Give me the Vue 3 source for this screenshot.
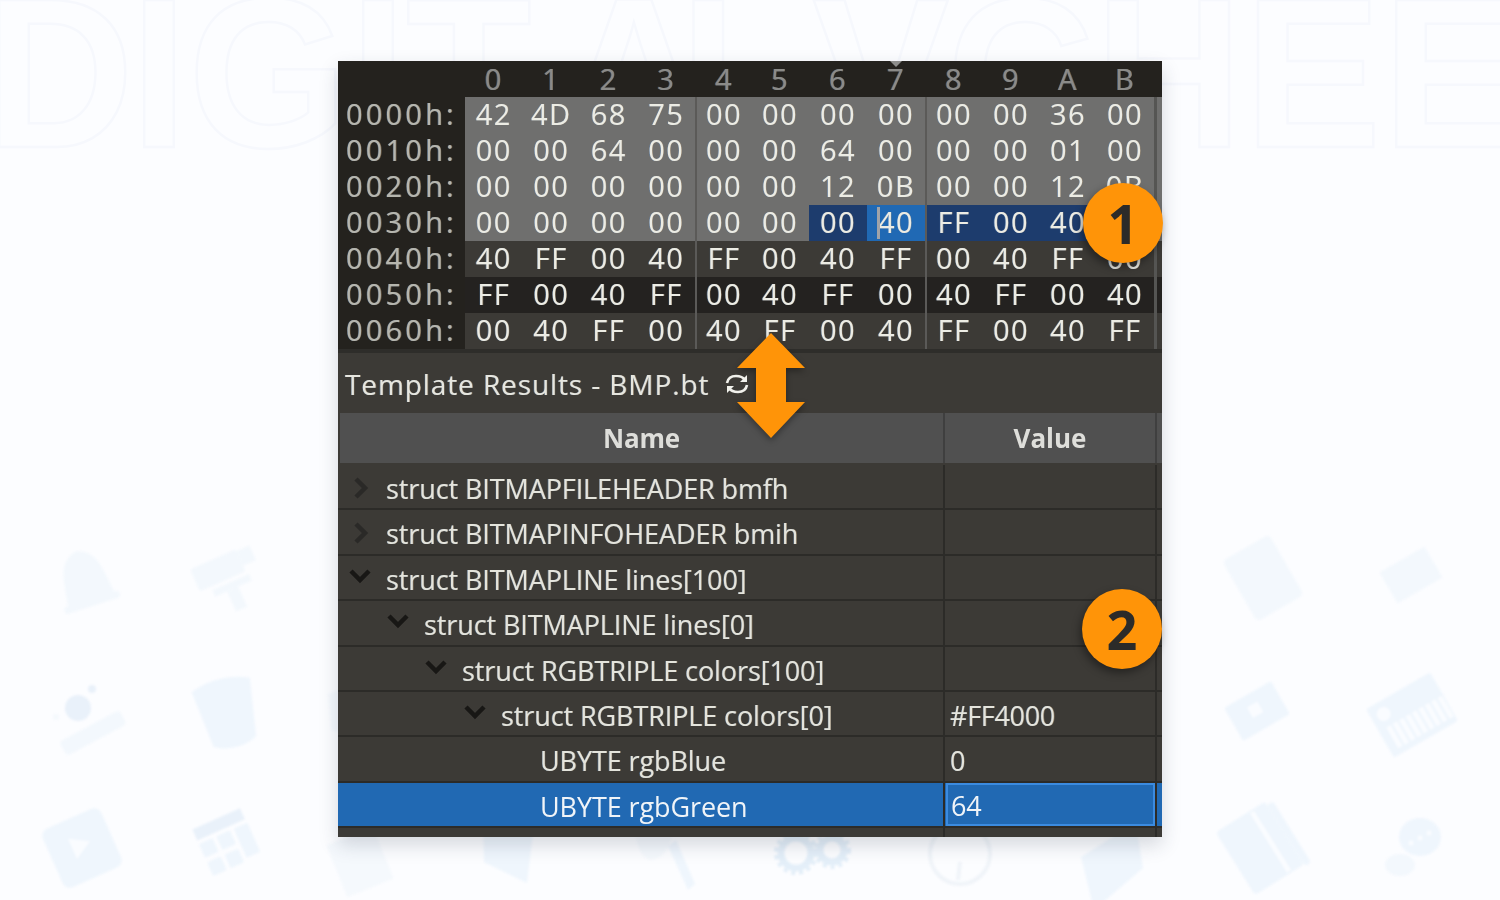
<script setup>
const columns = ['0', '1', '2', '3', '4', '5', '6', '7', '8', '9', 'A', 'B']

const hexRows = [
  { label: '0000h:', tone: 'grey', bytes: '42 4D 68 75 00 00 00 00 00 00 36 00' },
  { label: '0010h:', tone: 'grey', bytes: '00 00 64 00 00 00 64 00 00 00 01 00' },
  { label: '0020h:', tone: 'grey', bytes: '00 00 00 00 00 00 12 0B 00 00 12 0B' },
  { label: '0030h:', tone: 'grey', bytes: '00 00 00 00 00 00 00 40 FF 00 40 FF', from: 6, current: 7 },
  { label: '0040h:', tone: 'light', bytes: '40 FF 00 40 FF 00 40 FF 00 40 FF 00' },
  { label: '0050h:', tone: 'dark', bytes: 'FF 00 40 FF 00 40 FF 00 40 FF 00 40' },
  { label: '0060h:', tone: 'light', bytes: '00 40 FF 00 40 FF 00 40 FF 00 40 FF' }
]

// hex editor shows bytes in three blocks of four
function groupsOf(row) {
  const list = row.bytes.split(' ')
  return [0, 4, 8].map((start) =>
    list.slice(start, start + 4).map((text, i) => ({
      text,
      index: start + i,
      picked: row.from !== undefined && start + i >= row.from && start + i !== row.current,
      current: row.current === start + i
    }))
  )
}

const headGroups = [columns.slice(0, 4), columns.slice(4, 8), columns.slice(8, 12)]

const treeRows = [
  { name: 'struct BITMAPFILEHEADER bmfh', depth: 0, arrow: 'right' },
  { name: 'struct BITMAPINFOHEADER bmih', depth: 0, arrow: 'right' },
  { name: 'struct BITMAPLINE lines[100]', depth: 0, arrow: 'down' },
  { name: 'struct BITMAPLINE lines[0]', depth: 1, arrow: 'down' },
  { name: 'struct RGBTRIPLE colors[100]', depth: 2, arrow: 'down' },
  { name: 'struct RGBTRIPLE colors[0]', depth: 3, arrow: 'down', value: '#FF4000' },
  { name: 'UBYTE rgbBlue', depth: 4, value: '0' },
  { name: 'UBYTE rgbGreen', depth: 4, value: '64', selected: true }
]

const watermark = 'DIGITALVCHEE'
const watermarkX = '-15 136 196 364 423 583 708 846 986 1140 1296 1440'
</script>

<template>
  <div class="page">
    <svg class="backdrop" width="1500" height="900" viewBox="0 0 1500 900">
      <text class="mark" :x="watermarkX" y="147" transform="scale(.96 1)">{{ watermark }}</text>

      <g class="icons">
        <!-- bell -->
        <g class="soft" transform="translate(85 580) rotate(-18)">
          <path d="M-25 22 C-20 5 -24 -25 0 -30 C24 -25 20 5 25 22 Z" />
          <rect x="-29" y="20" width="58" height="7" rx="3" />
        </g>
        <!-- film camera -->
        <g class="soft" transform="translate(224 572) rotate(-24)">
          <rect x="-30" y="-16" width="50" height="24" rx="3" />
          <rect x="20" y="-14" width="14" height="16" />
          <rect x="-18" y="12" width="40" height="7" />
          <rect x="-5" y="19" width="12" height="22" />
        </g>
        <!-- webcam -->
        <rect class="soft" x="-34" y="-8" width="68" height="16" rx="4" transform="translate(93 733) rotate(-28)" />
        <circle class="darker" cx="78" cy="708" r="13" />
        <circle class="darker" cx="92" cy="689" r="4" />
        <circle class="pale" cx="56" cy="717" r="3" />
        <!-- bucket -->
        <path transform="translate(228 714) rotate(-14)" d="M-30 -30 C-12 -38 12 -38 30 -30 L22 28 C12 36 -12 36 -22 28 Z" />
        <path class="pale" d="M328 694 L338 690 L338 732 L331 730 Z" />
        <!-- video tablet -->
        <g transform="translate(82 848) rotate(-24)">
          <rect x="-32" y="-32" width="64" height="64" rx="8" />
          <path class="lighter" d="M-9 -14 L10 -3 L-9 8 Z" />
        </g>
        <!-- calendar grid -->
        <g transform="translate(230 850) rotate(-24)">
          <rect class="darker" x="-26" y="-34" width="52" height="12" />
          <rect x="-26" y="-18" width="15" height="15" rx="2" />
          <rect x="-7" y="-18" width="15" height="15" rx="2" />
          <rect x="12" y="-18" width="15" height="32" rx="2" />
          <rect x="-26" y="2" width="15" height="15" rx="2" />
          <rect x="-7" y="2" width="15" height="15" rx="2" />
        </g>
        <path class="pale" transform="translate(360 862) rotate(-22)" d="M-25 -28 H25 V28 H-25 Z" />
        <path d="M483 838 H535 L527 905 L484 884 Z" transform="translate(0 -4) scale(1 .98)" />
        <!-- magnifier -->
        <path class="pale" d="M636 837 H672 C668 852 660 860 650 860 C642 858 638 848 636 837 Z" />
        <path d="M668 868 L676 862 L695 906 L688 912 Z" transform="translate(0 -22)" />
        <!-- gears -->
        <circle class="ring" cx="796" cy="853" r="15" />
        <circle class="teeth" cx="796" cy="853" r="20" />
        <circle class="ring" cx="832" cy="850" r="12" />
        <circle class="teeth" cx="832" cy="850" r="17" />
        <!-- clock -->
        <circle class="clock" cx="960" cy="854" r="30" />
        <path class="clock" d="M960 862 L958 880" />
        <!-- folder -->
        <path d="M1082 877 L1128 848 L1136 838 L1144 888 L1095 930 Z" transform="translate(-1 -20)" />
        <!-- book -->
        <g transform="translate(1261 850) rotate(-32)">
          <rect x="-29" y="-39" width="58" height="74" rx="4" />
          <rect class="lighter" x="10" y="-37" width="5" height="70" />
          <rect x="29" y="-35" width="7" height="72" rx="3" />
        </g>
        <!-- chat -->
        <ellipse cx="1420" cy="837" rx="21" ry="19" />
        <ellipse class="soft" cx="1400" cy="865" rx="15" ry="11" />
        <circle class="lighter" cx="1411" cy="843" r="2.5" />
        <circle class="lighter" cx="1420" cy="838" r="2.5" />
        <circle class="lighter" cx="1429" cy="833" r="2.5" />
        <!-- tablet -->
        <g transform="translate(1263 578) rotate(-30)">
          <rect x="-27" y="-35" width="54" height="70" rx="5" class="soft" />
        </g>
        <!-- slab -->
        <rect class="soft" x="-26" y="-18" width="52" height="36" transform="translate(1411 575) rotate(-30)" />
        <!-- monitor -->
        <g transform="translate(1257 711) rotate(-30)">
          <rect x="-27" y="-19" width="54" height="38" rx="2" />
          <rect class="lighter" x="-7" y="-8" width="12" height="12" />
        </g>
        <!-- keyboard -->
        <g transform="translate(1412 715) rotate(-30)">
          <rect x="-37" y="-28" width="74" height="56" rx="3" />
          <circle class="lighter" cx="-24" cy="-15" r="7" />
          <rect v-for="k in 9" :key="k" class="lighter" :x="-36 + k * 7.4" y="-2" width="5" height="24" />
        </g>
      </g>
    </svg>

    <div class="window">
      <div class="hex-panel">
        <div class="hex-row head">
          <span class="hex-label"></span>
          <div v-for="(group, g) in headGroups" :key="g" class="hex-group" :class="'g' + g">
            <span v-for="col in group" :key="col" class="hex-cell">{{ col }}</span>
          </div>
          <span class="hex-end"></span>
          <i class="caret-mark"></i>
        </div>
        <div v-for="row in hexRows" :key="row.label" class="hex-row" :class="row.tone">
          <span class="hex-label">{{ row.label }}</span>
          <template v-for="(group, g) in groupsOf(row)" :key="g">
            <div class="hex-group" :class="'g' + g">
              <span
                v-for="cell in group"
                :key="cell.index"
                class="hex-cell"
                :class="{ picked: cell.picked, current: cell.current }"
              >{{ cell.text }}<i v-if="cell.current" class="cursor"></i></span>
            </div>
            <span class="hex-sep"></span>
          </template>
          <span class="hex-end"></span>
        </div>
      </div>

      <div class="results-bar">
        <span class="results-title">Template Results - BMP.bt</span>
        <svg class="refresh" width="28" height="24" viewBox="0 0 28 24" fill="none" stroke="#f1f1ec" stroke-width="2.6">
          <path d="M4 11 C5 6 9 4 13 4 C17 4 20 5 22 8" />
          <path d="M24 13 C23 18 19 20 15 20 C11 20 8 19 6 16" />
          <path d="M24 3 V10 H17" fill="#f1f1ec" stroke="none" />
          <path d="M4 21 V14 H11" fill="#f1f1ec" stroke="none" />
        </svg>
      </div>

      <div class="tree">
        <div class="tree-head">
          <span class="col-name">Name</span>
          <span class="col-value">Value</span>
          <span class="col-end"></span>
        </div>
        <div v-for="row in treeRows" :key="row.name" class="tree-row" :class="{ selected: row.selected }">
          <div class="col-name" :class="'depth' + row.depth">
            <svg v-if="row.arrow" class="chevron" :class="row.arrow" width="22" height="22" viewBox="0 0 22 22" fill="none">
              <path d="M7 2 L16 11 L7 20" />
            </svg>
            <span class="tree-text">{{ row.name }}</span>
          </div>
          <div class="col-value"><span class="value-text">{{ row.value }}</span></div>
          <span class="col-end"></span>
        </div>
        <div class="tree-foot">
          <span class="col-name"></span>
          <span class="col-value"></span>
          <span class="col-end"></span>
        </div>
      </div>

      <svg class="resize-arrow" width="88" height="126" viewBox="0 0 88 126">
        <path d="M44 4 L78 39 H59 V73 H78 L44 109 L10 73 H29 V39 H10 Z" fill="#ff9408" />
      </svg>
      <div class="badge badge-one">1</div>
      <div class="badge badge-two">2</div>
    </div>
  </div>
</template>

<style scoped>
.page {
  position: relative;
  width: 1500px;
  height: 900px;
  box-sizing: border-box;
  padding-top: 61px;
  display: flex;
  justify-content: center;
  align-items: flex-start;
  overflow: hidden;
  background: #fcfdff;
  font-family: "Open Sans", "Liberation Sans", sans-serif;
}

.backdrop {
  position: absolute;
  left: 0;
  top: 0;
}

.mark {
  font-family: "Liberation Sans", sans-serif;
  font-weight: 700;
  font-size: 214px;
  fill: none;
  stroke: #f6f8fd;
  stroke-width: 2.5px;
}

.icons {
  fill: #eff6fd;
  filter: blur(1px);
}

.icons .darker {
  fill: #e9f1fa;
}

.icons .lighter {
  fill: #fafcff;
}

.icons .pale {
  fill: #f5f9fd;
}

.icons .soft {
  fill: #f3f8fd;
}

.icons .ring {
  fill: none;
  stroke: #e4eff9;
  stroke-width: 7px;
}

.icons .teeth {
  fill: none;
  stroke: #e4eff9;
  stroke-width: 4px;
  stroke-dasharray: 4 4;
}

.icons .clock {
  fill: none;
  stroke: #f0f4f9;
  stroke-width: 4px;
}

.window {
  position: relative;
  width: 824px;
  background: #3c3a36;
  box-shadow: 0 8px 18px rgba(40, 50, 70, 0.18);
}

/* hex view */
.hex-panel,
.tree {
  filter: blur(0.3px);
}

.hex-row {
  position: relative;
  display: flex;
  height: 36px;
  font-size: 29px;
  line-height: 34px;
  letter-spacing: 1.5px;
  color: #ecece4;
  text-shadow: -0.6px 0 rgba(95, 145, 205, 0.45), 0.6px 0 rgba(215, 175, 125, 0.45);
}

.hex-row.head {
  background: #24221e;
  color: #8b8b88;
  line-height: 36px;
}

.hex-row.grey {
  background: #6f6f6e;
}

.hex-row.light {
  background: #3c3a36;
}

.hex-row.dark {
  background: #242220;
}

.hex-label {
  width: 127px;
  flex: none;
  box-sizing: border-box;
  padding-left: 8px;
  background: #24221e;
  color: #b6b6ae;
  letter-spacing: 3.2px;
  white-space: nowrap;
}

.hex-group {
  display: flex;
  flex: none;
}

.g0 {
  width: 230px;
}

.g1 {
  width: 228px;
}

.g2 {
  width: 227px;
}

.hex-cell {
  position: relative;
  display: block;
  width: 57.5px;
  flex: none;
  text-align: center;
}

.g1 .hex-cell {
  width: 58px;
}

.g1 .hex-cell:first-child {
  width: 54px;
}

.g2 .hex-cell {
  width: 57px;
  box-sizing: border-box;
  padding-right: 3px;
}

.head .g0 {
  margin-right: 2px;
}

.head .g1 {
  margin-right: 2px;
}

.hex-cell.picked {
  background: #1d3c6d;
}

.hex-cell.current {
  background: #2069b4;
}

.cursor {
  position: absolute;
  left: 10px;
  top: 2px;
  width: 3px;
  height: 32px;
  background: #a0a3a8;
}

.hex-sep {
  width: 2px;
  flex: none;
  background: #5b5a58;
}

.hex-group.g2 + .hex-sep {
  width: 3px;
  background: #555553;
}

.hex-end {
  flex: 1;
}

.caret-mark {
  position: absolute;
  left: 552px;
  top: 0;
  width: 0;
  height: 0;
  border-left: 6px solid transparent;
  border-right: 6px solid transparent;
  border-top: 6px solid #8e8e8c;
}

/* template results */
.results-bar {
  display: flex;
  align-items: center;
  gap: 14px;
  height: 64px;
  box-sizing: border-box;
  padding: 2px 0 0 7px;
  border-top: 4px solid #2e2d2a;
}

.results-title {
  font-size: 28px;
  letter-spacing: 0.9px;
  color: #e6e6df;
  white-space: nowrap;
  text-shadow: -0.6px 0 rgba(95, 145, 205, 0.45), 0.6px 0 rgba(215, 175, 125, 0.45);
}

.refresh {
  flex: none;
}

.tree-head,
.tree-row,
.tree-foot {
  display: flex;
}

.tree-head {
  height: 50px;
  margin-left: 2px;
  margin-bottom: 2px;
  background: #505050;
  font-size: 26px;
  font-weight: 700;
  line-height: 50px;
  text-align: center;
  color: #dededa;
}

.tree-head .col-name {
  width: 605px;
  letter-spacing: -0.2px;
}

.tree-head .col-value {
  letter-spacing: 0;
}

.col-name {
  position: relative;
  display: flex;
  width: 607px;
  flex: none;
  box-sizing: border-box;
  border-right: 2px solid #2c2b28;
}

.tree-head .col-name,
.tree-head .col-value {
  display: block;
  border-right-color: #3f3f3f;
}

.col-value {
  width: 212px;
  flex: none;
  box-sizing: border-box;
  border-right: 2px solid #2c2b28;
}

.col-end {
  flex: 1;
}

.tree-row {
  height: 45.4px;
  box-sizing: border-box;
  border-bottom: 2px solid #2c2b28;
  font-size: 27px;
  line-height: 47px;
  color: #e4e4dc;
  white-space: nowrap;
  text-shadow: -0.6px 0 rgba(95, 145, 205, 0.45), 0.6px 0 rgba(215, 175, 125, 0.45);
}

.tree-row.selected {
  background: #2169b3;
  color: #f0f4f8;
  text-shadow: none;
}

.tree-text {
  letter-spacing: -0.1px;
}

.value-text {
  display: block;
  height: 100%;
  box-sizing: border-box;
  padding-left: 5px;
  letter-spacing: -0.3px;
}

.tree-row.selected .value-text {
  margin: 0 0 0 1px;
  padding-left: 3px;
  height: 43px;
  line-height: 41px;
  border: 2px solid #3b8be0;
}

.col-name.depth0 {
  padding-left: 48px;
}

.col-name.depth1 {
  padding-left: 86px;
}

.col-name.depth2 {
  padding-left: 124px;
}

.col-name.depth3 {
  padding-left: 163px;
}

.col-name.depth4 {
  padding-left: 202px;
}

.chevron {
  position: absolute;
  top: 12px;
  margin-left: -37px;
}

.chevron path {
  stroke-width: 4.5px;
  stroke: #2a2927;
}

.chevron.down {
  transform: rotate(90deg);
  top: 8px;
}

.chevron.down path {
  stroke: #181715;
}

.tree-foot {
  height: 9px;
}

/* callouts laid over the window */
.resize-arrow {
  position: absolute;
  left: 389px;
  top: 268px;
  filter: drop-shadow(0 3px 3px rgba(0, 0, 0, 0.35));
}

.badge {
  position: absolute;
  width: 80px;
  height: 80px;
  border-radius: 50%;
  background: #ff9408;
  box-shadow: -2px 4px 8px rgba(0, 0, 0, 0.4);
  font-size: 54px;
  font-weight: 700;
  line-height: 80px;
  text-align: center;
  color: #2c2b29;
}

.badge-one {
  left: 745px;
  top: 122px;
}

.badge-two {
  left: 744px;
  top: 528px;
}
</style>

<style>
html,
body {
  margin: 0;
  background: #fcfdff;
}
</style>
